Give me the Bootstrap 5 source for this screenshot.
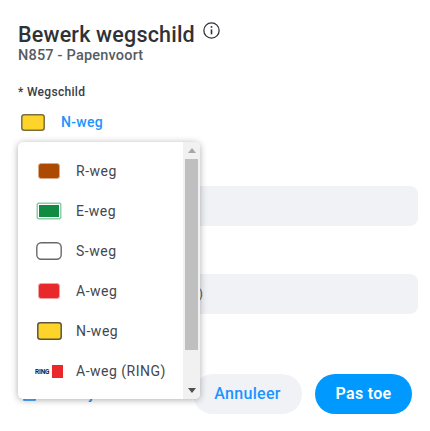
<!DOCTYPE html>
<html lang="nl">
<head>
    <meta charset="UTF-8">
    <meta name="viewport" content="width=device-width, initial-scale=1.0">
    <title>Bewerk wegschild</title>
    <link href="https://cdn.jsdelivr.net/npm/bootstrap@5.3.1/dist/css/bootstrap.min.css" rel="stylesheet">
    <style>
        body { font-family: Roboto, "Liberation Sans", sans-serif; background: #fff; color: #2f3237; overflow: hidden; }
        .sheet { position: relative; height: 431px; padding: 22px 12px 0 18px; }
        .titel { font-size: 21.5px; font-weight: 500; line-height: 24px; letter-spacing: .2px; margin: 0; color: #2f3237; }
        .info-icon { margin: 0 0 8px 8px; }
        .sub { font-size: 14.5px; font-weight: 500; line-height: 16px; margin-top: 1px; color: #565b64; letter-spacing: .2px; }
        .veld-label { font-size: 12px; font-weight: 500; line-height: 14px; letter-spacing: .3px; color: #3a3d44; margin-top: 21px; }
        .keuze { height: 20px; margin-top: 13px; color: #1b95ff; font-size: 14px; font-weight: 500; letter-spacing: .3px; }
        .keuze svg { margin: 0 16px 0 3px; }
        .invoer { height: 40px; background: #f1f2f6; border-radius: 8px; padding-left: 12px; font-size: 13px; color: #565b64; }
        .invoer-a { margin-top: 54px; }
        .invoer-b { margin-top: 48px; justify-content: flex-end; padding-right: 215px; }
        .voet { height: 40px; margin-top: 60px; padding-right: 6px; }
        .verwijder { color: #1b95ff; font-size: 14px; font-weight: 500; padding-left: 5px; gap: 16px; letter-spacing: .4px; }
        .knop { height: 40px; border-radius: 20px; font-size: 16px; font-weight: 500; border: 0; letter-spacing: .3px; padding: 0; }
        .knop-licht { width: 109px; background: #f1f2f6; color: #1b95ff; }
        .knop-blauw { width: 97px; background: #0099ff; color: #fff; font-weight: 600; }
        .knoppen { gap: 13px; }
        .wegmenu { position: absolute; left: 18px; top: 142px; width: 182px; height: 257px; background: #fff; border-radius: 5px; overflow: hidden; box-shadow: 0 1px 7px rgba(0,0,0,.32); }
        .wegopties { width: 165px; padding-top: 9px; }
        .wegoptie { height: 40px; padding: 0; border: 0; color: #434750; font-size: 14px; letter-spacing: .5px; }
        .wegicoon { width: 58px; flex: 0 0 58px; padding-left: 4px; }
        .balk { width: 17px; background: #f1f1f1; padding: 0 2px; }
        .pijl { height: 17px; }
        .duim { height: 191px; background: #bfbfbf; }
    </style>
</head>
<body>
    <div class="sheet">
        <div class="d-flex align-items-center">
            <h1 class="titel">Bewerk wegschild</h1>
            <svg class="info-icon" width="17" height="17" viewBox="0 0 16 16" fill="none" stroke="#2f3237" stroke-width="1.2">
                <circle cx="8" cy="8" r="7.2"/>
                <path d="M8 7v4.6" stroke-width="1.5"/>
                <circle cx="8" cy="4.6" r=".9" fill="#2f3237" stroke="none"/>
            </svg>
        </div>
        <div class="sub">N857 - Papenvoort</div>

        <div class="veld-label">* Wegschild</div>
        <div class="keuze d-flex align-items-center">
            <svg width="24" height="17" viewBox="0 0 24 17"><rect x=".8" y=".8" width="22.4" height="15.4" rx="2.5" fill="#ffd42a" stroke="#7a7040" stroke-width="1.5"/></svg>
            <span>N-weg</span>
        </div>

        <div class="invoer invoer-a d-flex align-items-center"></div>
        <div class="invoer invoer-b d-flex align-items-center">(N857)</div>

        <div class="voet d-flex align-items-center">
            <div class="verwijder d-flex align-items-center flex-grow-1">
                <svg width="13" height="14" viewBox="0 0 13 14" fill="none" stroke="#1b95ff" stroke-width="1.4"><path d="M1 3h11v10H1zM4 1v2M9 1v2M4.5 6v5M8.5 6v5"/></svg>
                <span>Verwijder</span>
            </div>
            <div class="knoppen d-flex">
                <button type="button" class="btn knop knop-licht">Annuleer</button>
                <button type="button" class="btn knop knop-blauw">Pas toe</button>
            </div>
        </div>

        <div class="wegmenu d-flex">
            <div class="wegopties list-group list-group-flush">
                <div class="wegoptie list-group-item d-flex align-items-center">
                    <span class="wegicoon d-flex justify-content-center"><svg width="22" height="16" viewBox="0 0 22 16"><rect x=".5" y=".5" width="21" height="15" rx="2.5" fill="#ab4a00" stroke="#d9a988"/></svg></span>
                    <span>R-weg</span>
                </div>
                <div class="wegoptie list-group-item d-flex align-items-center">
                    <span class="wegicoon d-flex justify-content-center"><svg width="26" height="18" viewBox="0 0 26 18"><rect x=".5" y=".5" width="25" height="17" rx="2" fill="#8fcda8"/><rect x="2" y="2" width="22" height="14" rx="1" fill="#fff"/><rect x="3" y="3" width="20" height="12" fill="#118a42"/></svg></span>
                    <span>E-weg</span>
                </div>
                <div class="wegoptie list-group-item d-flex align-items-center">
                    <span class="wegicoon d-flex justify-content-center"><svg width="26" height="18" viewBox="0 0 26 18"><rect x=".8" y=".8" width="24.4" height="16.4" rx="4.5" fill="#fff" stroke="#66686b" stroke-width="1.4"/></svg></span>
                    <span>S-weg</span>
                </div>
                <div class="wegoptie list-group-item d-flex align-items-center">
                    <span class="wegicoon d-flex justify-content-center"><svg width="22" height="16" viewBox="0 0 22 16"><rect x=".5" y=".5" width="21" height="15" rx="2.5" fill="#e8282b" stroke="#f3a0a0"/></svg></span>
                    <span>A-weg</span>
                </div>
                <div class="wegoptie list-group-item d-flex align-items-center">
                    <span class="wegicoon d-flex justify-content-center"><svg width="25" height="18" viewBox="0 0 25 18"><rect x=".8" y=".8" width="23.4" height="16.4" rx="2.5" fill="#ffd42a" stroke="#5d5535" stroke-width="1.5"/></svg></span>
                    <span>N-weg</span>
                </div>
                <div class="wegoptie list-group-item d-flex align-items-center">
                    <span class="wegicoon d-flex justify-content-center"><svg width="28" height="13" viewBox="0 0 28 13"><text x="0" y="9" font-family="Roboto, sans-serif" font-size="6.5" font-weight="700" fill="#222" textLength="15">RING</text><rect x="17" y="0" width="11" height="13" fill="#e8282b"/></svg></span>
                    <span>A-weg (RING)</span>
                </div>
            </div>
            <div class="balk ms-auto d-flex flex-column">
                <div class="pijl d-flex align-items-center justify-content-center"><svg width="8" height="5" viewBox="0 0 8 5"><path d="M4 0l4 5H0z" fill="#a8a8a8"/></svg></div>
                <div class="duim"></div>
                <div class="pijl mt-auto d-flex align-items-center justify-content-center"><svg width="8" height="5" viewBox="0 0 8 5"><path d="M0 0h8L4 5z" fill="#505050"/></svg></div>
            </div>
        </div>
    </div>

    <script src="https://cdn.jsdelivr.net/npm/bootstrap@5.3.1/dist/js/bootstrap.bundle.min.js"></script>
</body>
</html>
